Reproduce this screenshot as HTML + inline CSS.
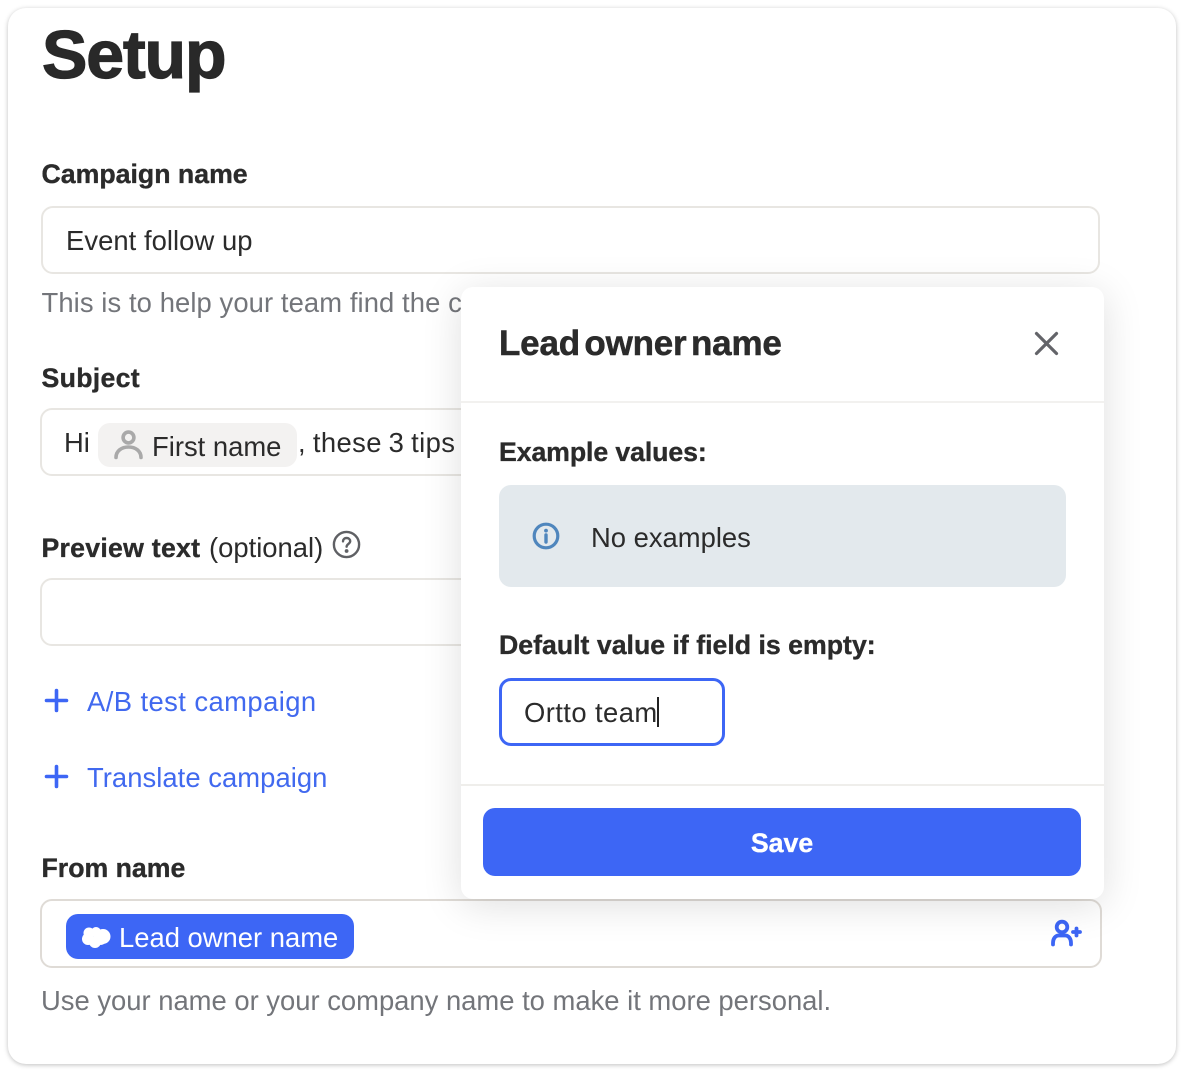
<!DOCTYPE html>
<html lang="en">
<head>
<meta charset="utf-8">
<title>Setup</title>
<style>
html,body{margin:0;padding:0;background:#fff;}
body{position:relative;width:1200px;height:1074px;overflow:hidden;font-family:"Liberation Sans",sans-serif;color:#2b2b2b;}
#wrap{position:absolute;left:0;top:0;width:1200px;height:1074px;filter:blur(.35px);}
.t{position:absolute;white-space:nowrap;line-height:1;}
.b{font-weight:700;-webkit-text-stroke:.35px currentColor;}
.box{position:absolute;box-sizing:border-box;background:#fff;border:2px solid #e8e6e2;border-radius:12px;}
#card{position:absolute;left:8px;top:8px;width:1168px;height:1056px;background:#fff;border-radius:18px;box-shadow:0 1px 5px rgba(0,0,0,.25);}
#pop{position:absolute;left:461px;top:287px;width:643px;height:612px;background:#fff;border-radius:12px;box-shadow:0 6px 40px rgba(0,0,0,.13);}
svg{position:absolute;display:block;}
</style>
</head>
<body>
<div id="wrap">
<div id="card"></div>

<div class="t b" style="left:42px;top:21px;font-size:68px;letter-spacing:-1.1px;color:#292929;-webkit-text-stroke:1.3px #292929;">Setup</div>

<div class="t b" style="left:41.5px;top:161px;font-size:26.7px;">Campaign name</div>
<div class="box" style="left:41px;top:206px;width:1059px;height:68px;"></div>
<div class="t" style="left:66px;top:227px;font-size:27.4px;letter-spacing:.05px;">Event follow up</div>
<div class="t" style="left:41.5px;top:289px;font-size:27.4px;letter-spacing:.09px;color:#73757a;">This is to help your team find the c</div>

<div class="t b" style="left:41.5px;top:365px;font-size:26.7px;letter-spacing:.3px;">Subject</div>
<div class="box" style="left:40px;top:408px;width:500px;height:68px;"></div>
<div class="t" style="left:64px;top:429px;font-size:27.4px;">Hi</div>
<div style="position:absolute;left:98px;top:423px;width:199px;height:44px;background:#f3f2f1;border-radius:12px;"></div>
<svg style="left:112px;top:428px;" width="32" height="33" viewBox="0 0 32 33" fill="none" stroke="#a9a9a9" stroke-width="3.6" stroke-linecap="round"><circle cx="16.5" cy="9.5" r="5.4"/><path d="M4 29.5c0-6.5 5.5-10.5 12.5-10.5S29 23 29 29.5"/></svg>
<div class="t" style="left:152px;top:433px;font-size:27.4px;">First name</div>
<div class="t" style="left:298px;top:429px;font-size:27.4px;letter-spacing:.4px;word-spacing:-1.2px;">, these 3 tips</div>

<div class="t b" style="left:41.5px;top:535px;font-size:26.7px;letter-spacing:.25px;">Preview text</div>
<div class="t" style="left:209px;top:534px;font-size:27.4px;">(optional)</div>
<svg style="left:332px;top:530px;" width="29" height="29" viewBox="0 0 29 29" fill="none" stroke="#5f6064" stroke-width="2.4" stroke-linecap="round"><circle cx="14.5" cy="14.5" r="12.6"/><path d="M11 11.4c0-2.1 1.6-3.4 3.6-3.4s3.6 1.3 3.6 3.1c0 2.8-3.6 2.8-3.6 5.6"/><circle cx="14.6" cy="21" r=".7" fill="#5f6064"/></svg>
<div class="box" style="left:40px;top:578px;width:500px;height:68px;"></div>

<svg style="left:44px;top:688px;" width="25" height="25" viewBox="0 0 25 25" stroke="#3d66f5" stroke-width="3.6" stroke-linecap="round"><path d="M12.5 2.5v20M2.5 12.5h20"/></svg>
<div class="t" style="left:87px;top:688px;font-size:27.4px;letter-spacing:.43px;color:#4169ef;">A/B test campaign</div>
<svg style="left:44px;top:764px;" width="25" height="25" viewBox="0 0 25 25" stroke="#3d66f5" stroke-width="3.6" stroke-linecap="round"><path d="M12.5 2.5v20M2.5 12.5h20"/></svg>
<div class="t" style="left:87px;top:764px;font-size:27.4px;letter-spacing:.05px;color:#4169ef;">Translate campaign</div>

<div class="t b" style="left:41.5px;top:855px;font-size:26.7px;">From name</div>
<div class="box" style="left:40px;top:899px;width:1062px;height:69px;border-color:#dfdbd6;"></div>
<div style="position:absolute;left:66px;top:914px;width:288px;height:45px;background:#3d66f5;border-radius:12px;"></div>
<svg style="left:81px;top:926px;" width="31" height="24" viewBox="0 0 31 24" fill="#fff"><circle cx="8" cy="7" r="5.5"/><circle cx="15" cy="6" r="5"/><circle cx="22" cy="10.5" r="7.5"/><circle cx="7" cy="13" r="6"/><circle cx="14" cy="16" r="6"/><circle cx="20" cy="14" r="5"/></svg>
<div class="t" style="left:119px;top:924px;font-size:27.4px;color:#fff;">Lead owner name</div>
<svg style="left:1049px;top:919px;" width="33" height="28" viewBox="0 0 33 28" fill="none" stroke="#3d66f5" stroke-width="3.8" stroke-linecap="round"><circle cx="13" cy="8" r="5.3"/><path d="M4 25.5v-1.5c0-4.5 2.5-7.5 5.5-7.5h7c3 0 5.5 3 5.5 7.5v1.5"/><path d="M27.5 9.5v7M24 13h7"/></svg>
<div class="t" style="left:41px;top:987px;font-size:27.4px;color:#73757a;">Use your name or your company name to make it more personal.</div>

<div id="pop"></div>
<div class="t b" style="left:499px;top:326px;font-size:35px;letter-spacing:-.2px;word-spacing:-5px;color:#2b2b2b;-webkit-text-stroke:.5px #2b2b2b;">Lead owner name</div>
<svg style="left:1033px;top:330px;" width="27" height="27" viewBox="0 0 27 27" stroke="#636469" stroke-width="3.2" stroke-linecap="round"><path d="M3.5 3.5l20 20M23.5 3.5l-20 20"/></svg>
<div style="position:absolute;left:461px;top:401px;width:643px;height:2px;background:#f2f1ef;"></div>

<div class="t b" style="left:499px;top:439px;font-size:26.7px;letter-spacing:-.1px;">Example values:</div>
<div style="position:absolute;left:499px;top:485px;width:567px;height:102px;background:#e3e9ed;border-radius:12px;"></div>
<svg style="left:532px;top:522px;" width="28" height="28" viewBox="0 0 28 28" fill="none"><circle cx="14" cy="14" r="11.8" stroke="#4f86bd" stroke-width="3.2"/><path d="M14 13v7" stroke="#4f86bd" stroke-width="3.4" stroke-linecap="round"/><circle cx="14" cy="8.6" r="1.9" fill="#4f86bd"/></svg>
<div class="t" style="left:591px;top:524px;font-size:27.4px;">No examples</div>

<div class="t b" style="left:499px;top:632px;font-size:26.7px;">Default value if field is empty:</div>
<div class="box" style="left:499px;top:678px;width:226px;height:68px;border:3px solid #3d66f5;"></div>
<div class="t" style="left:524px;top:699px;font-size:27.4px;letter-spacing:.42px;">Ortto team</div>
<div style="position:absolute;left:657px;top:697px;width:2px;height:30px;background:#222;"></div>

<div style="position:absolute;left:461px;top:784px;width:643px;height:2px;background:#efeeeb;"></div>
<div style="position:absolute;left:483px;top:808px;width:598px;height:68px;background:#3d66f5;border-radius:12px;"></div>
<div class="t b" style="left:483px;top:830px;width:598px;text-align:center;font-size:26.7px;color:#fff;">Save</div>
</div>
</body>
</html>
